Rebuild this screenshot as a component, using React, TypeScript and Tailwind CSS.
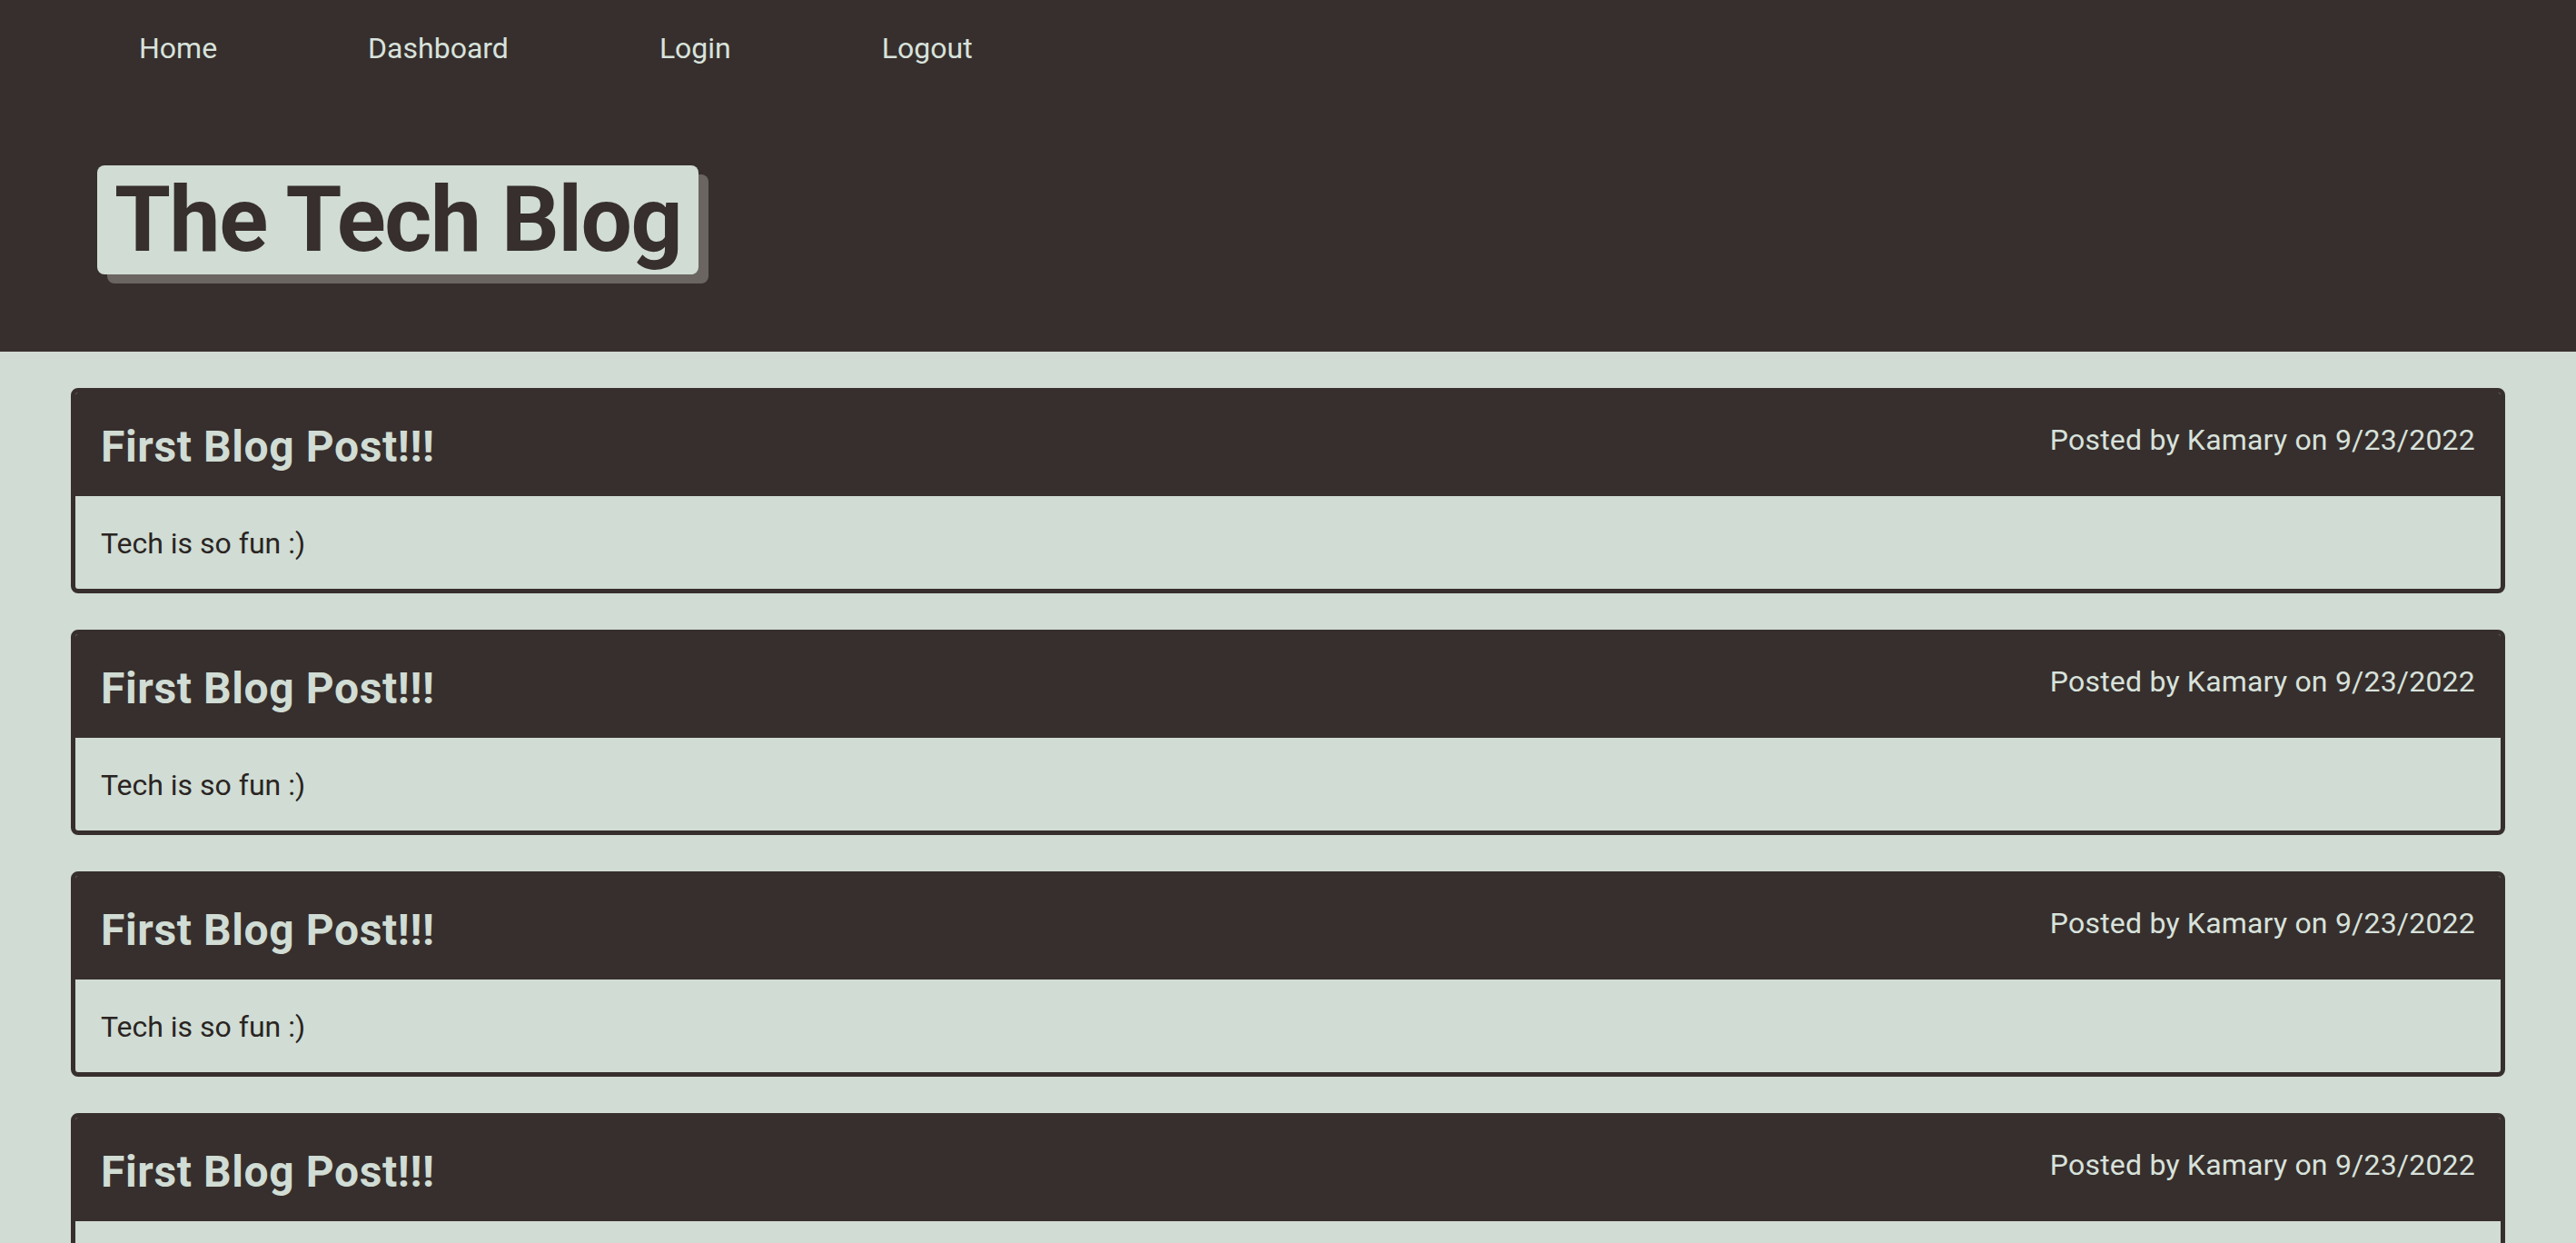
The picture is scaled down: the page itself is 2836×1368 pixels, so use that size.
import React from 'react';

const posts = [1, 2, 3, 4].map((i) => ({
  id: i,
  title: 'First Blog Post!!!',
  author: 'Kamary',
  date: '9/23/2022',
  body: 'Tech is so fun :)',
}));

const App: React.FC = () => {
  return (
    <div className="min-h-screen bg-[#d0dcd4] font-['Roboto','Liberation_Sans',sans-serif]">
      <header className="h-[387px] bg-[#372f2d]">
        <nav className="flex gap-[166px] pl-[153px] pt-[37px]">
          {['Home', 'Dashboard', 'Login', 'Logout'].map((link) => (
            <a key={link} href="#" className="text-[32px] leading-[32px] text-[#d8e2dc]">
              {link}
            </a>
          ))}
        </nav>
        <div className="ml-[107px] mt-[113px] inline-block">
          <h1 className="rounded-[8px] bg-[#d0dcd4] px-[19px] text-[100px] leading-[120px] font-bold tracking-[-1.4px] text-[#372f2d] shadow-[11px_10px_0_#6b6562]">
            The Tech Blog
          </h1>
        </div>
      </header>

      <main className="flex flex-col gap-[40px] px-[78px] pt-[40px] pb-[40px]">
        {posts.map((post) => (
          <article key={post.id} className="overflow-hidden rounded-[8px] border-[5px] border-[#372f2d]">
            <div className="flex h-[114px] items-start justify-between bg-[#372f2d] px-[28px]">
              <h2 className="pt-[36px] text-[48px] leading-[48px] font-bold tracking-[0.6px] text-[#d0dcd4]">{post.title}</h2>
              <p className="pt-[36px] text-[32px] leading-[32px] tracking-[0.2px] text-[#d8e2dc]">
                Posted by {post.author} on {post.date}
              </p>
            </div>
            <div className="h-[102px] px-[28px] pt-[36px]">
              <p className="text-[32px] leading-[32px] text-[#2a2422]">{post.body}</p>
            </div>
          </article>
        ))}
      </main>
    </div>
  );
};

export default App;
